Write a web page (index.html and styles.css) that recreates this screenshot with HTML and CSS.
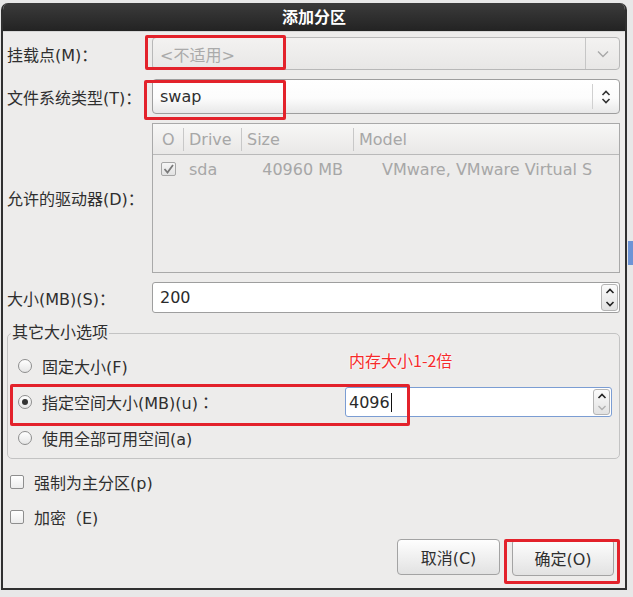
FILE: index.html
```html
<!DOCTYPE html>
<html lang="zh-CN">
<head>
<meta charset="utf-8">
<title>添加分区</title>
<link rel="stylesheet" href="styles.css">
</head>
<body>
<div class="screen">
  <div class="window">
    <div class="titlebar">添加分区</div>
    <div class="content">
      <div class="form">
        <label class="label">挂载点(M)<span class="colon">：</span></label>
        <div class="combo disabled">
          <span class="combo-text">&lt;不适用&gt;</span>
          <span class="combo-btn">
            <svg width="12" height="8" viewBox="0 0 12 8"><polyline points="1,1.5 6,6.5 11,1.5" fill="none" stroke="#a8a8a8" stroke-width="1.4"/></svg>
          </span>
        </div>

        <label class="label">文件系统类型(T)<span class="colon">：</span></label>
        <div class="combo active">
          <span class="combo-text">swap</span>
          <span class="combo-btn">
            <svg width="10" height="14" viewBox="0 0 10 14"><polyline points="1.5,5 5,1.5 8.5,5" fill="none" stroke="#333" stroke-width="1.6"/><polyline points="1.5,9 5,12.5 8.5,9" fill="none" stroke="#333" stroke-width="1.6"/></svg>
          </span>
        </div>

        <label class="label">允许的驱动器(D)<span class="colon">：</span></label>
        <div class="drives">
          <div class="drives-head">
            <span class="hc hc1">O</span>
            <span class="hc">Drive</span>
            <span class="hc">Size</span>
            <span class="hc">Model</span>
          </div>
          <div class="drives-row">
            <span class="dc dc1"><span class="tcheck"><svg width="13" height="12" viewBox="0 0 13 12"><polyline points="2.5,6 5.5,9.5 11,2" fill="none" stroke="#7a7a7a" stroke-width="1.8"/></svg></span></span>
            <span class="dc dc2">sda</span>
            <span class="dc dc3">40960 MB</span>
            <span class="dc dc4">VMware, VMware Virtual S</span>
          </div>
        </div>

        <label class="label">大小(MB)(S)<span class="colon">：</span></label>
        <div class="spin">
          <span class="spin-text">200</span>
          <span class="spin-btns">
            <span class="sb"><svg width="10" height="6" viewBox="0 0 10 6"><polyline points="1.5,5 5,1.5 8.5,5" fill="none" stroke="#222" stroke-width="1.6"/></svg></span>
            <span class="sb"><svg width="10" height="6" viewBox="0 0 10 6"><polyline points="1.5,1 5,4.5 8.5,1" fill="none" stroke="#222" stroke-width="1.6"/></svg></span>
          </span>
        </div>
      </div>

      <fieldset class="frame">
        <legend>其它大小选项</legend>
        <div class="opt"><span class="radio"></span>固定大小(F)</div>
        <div class="opt">
          <span class="radio checked"></span>指定空间大小(MB)(u)<span class="colon">：</span>
          <div class="spin focus">
            <span class="spin-text">4096<span class="caret"></span></span>
            <span class="spin-btns">
              <span class="sb"><svg width="10" height="6" viewBox="0 0 10 6"><polyline points="1.5,5 5,1.5 8.5,5" fill="none" stroke="#222" stroke-width="1.6"/></svg></span>
              <span class="sb"><svg width="10" height="6" viewBox="0 0 10 6"><polyline points="1.5,1 5,4.5 8.5,1" fill="none" stroke="#b0b0b0" stroke-width="1.4"/></svg></span>
            </span>
          </div>
        </div>
        <div class="opt"><span class="radio"></span>使用全部可用空间(a)</div>
      </fieldset>

      <div class="check-row"><span class="checkbox"></span>强制为主分区(p)</div>
      <div class="check-row"><span class="checkbox"></span>加密（E)</div>

      <div class="buttons">
        <button class="btn btn-cancel">取消(C)</button>
        <button class="btn btn-ok">确定(O)</button>
      </div>
    </div>
  </div>

  <div class="side-blue"></div>
  <div class="note">内存大小1-2倍</div>
  <div class="mark mark-mount"></div>
  <div class="mark mark-fs"></div>
  <div class="mark mark-size"></div>
  <div class="mark mark-ok"></div>
</div>
</body>
</html>
```

FILE: styles.css
```css
* { box-sizing: border-box; }
html, body { margin: 0; padding: 0; }
body {
  background: #e8e8e8;
  font-family: "DejaVu Sans", "Noto Sans CJK SC", sans-serif;
  font-size: 16px;
  color: #2f2f2f;
  width: 633px;
  height: 597px;
  overflow: hidden;
}
.screen { position: relative; width: 633px; height: 597px; }

.window {
  margin-left: 1px;
  margin-top: 3px;
  width: 626px;
  border: 2px solid #303030;
  border-top: none;
  border-radius: 7px 7px 0 0;
  overflow: hidden;
  background: #edeceb;
}
.titlebar {
  height: 29px;
  line-height: 29px;
  background: linear-gradient(#3b3b3b, #232323);
  color: #fff;
  font-weight: bold;
  font-size: 16px;
  text-align: center;
  border-bottom: 1px solid #d6d6d6;
}
.content { padding: 5px 5px 12px 4px; background: #edeceb; }

.form {
  display: grid;
  grid-template-columns: 145px 1fr;
  row-gap: 9px;
  align-items: center;
}
.label { white-space: nowrap; }
.colon { font-family: "Noto Sans CJK TC", "DejaVu Sans", sans-serif; }

.combo {
  display: flex;
  height: 33px;
  border: 1px solid #b8b8b8;
  border-radius: 4px;
  background: linear-gradient(#f3f2f1, #e8e7e6);
}
.combo-text { flex: 1; display: flex; align-items: center; padding-left: 7px; }
.combo.disabled .combo-text { color: #aaaaaa; }
.combo-btn {
  width: 34px;
  display: flex;
  align-items: center;
  justify-content: center;
  border-left: 1px solid #c6c6c6;
}
.combo.active {
  height: 35px;
  border-color: #9e9e9e;
  background: linear-gradient(#ffffff 0%, #fcfcfc 55%, #e8e8e8 100%);
}
.combo.active .combo-btn { width: 27px; margin: 4px 0; border-left-color: #d0d0d0; }

.drives {
  height: 150px;
  border: 1px solid #a9a9a9;
  background: #edeceb;
  overflow: hidden;
  color: #a7a7a7;
}
.drives-head {
  display: grid;
  grid-template-columns: 30px 58px 112px 1fr;
  align-items: center;
  height: 31px;
  border-bottom: 1px solid #b9b9b9;
  background: linear-gradient(#f7f7f6, #e9e8e7);
}
.hc { height: 23px; line-height: 23px; padding-left: 5px; border-left: 1px solid #c8c8c8; }
.hc1 { border-left: none; padding-left: 9px; }
.drives-row {
  display: grid;
  grid-template-columns: 30px 58px 112px 1fr;
  align-items: center;
  height: 28px;
  white-space: nowrap;
}
.dc1 { padding-left: 8px; display: flex; }
.dc2 { padding-left: 6px; }
.dc3 { text-align: right; padding-right: 10px; }
.dc4 { padding-left: 29px; overflow: hidden; }
.tcheck {
  width: 15px;
  height: 14px;
  border: 1px solid #a6a6a6;
  border-radius: 2px;
  background: linear-gradient(#f6f6f6, #e2e2e2);
  display: flex;
  align-items: center;
  justify-content: center;
}

.spin {
  display: flex;
  height: 31px;
  border: 1px solid #9e9e9e;
  border-radius: 3px;
  background: #fff;
}
.spin-text { flex: 1; display: flex; align-items: center; padding-left: 7px; color: #2a2a2a; }
.spin-btns {
  width: 17px;
  margin: 1px;
  display: flex;
  flex-direction: column;
  border: 1px solid #b4b4b4;
  border-radius: 3px;
  background: linear-gradient(#fbfbfb, #e2e2e2);
}
.sb { flex: 1; display: flex; align-items: center; justify-content: center; }
.spin.focus {
  width: 267px;
  height: 30px;
  margin-left: auto;
  border-color: #7b9dd3;
}
.spin.focus .spin-text { padding-left: 3px; }
.caret { display: inline-block; width: 1px; height: 19px; background: #111; margin-left: 1px; }

.frame {
  margin: 10px 0 0 0;
  padding: 8px 7px 5px 10px;
  border: 1px solid #c3c3c3;
  border-radius: 5px;
  min-width: 0;
}
.frame legend {
  padding: 0 1px;
  margin-left: -7px;
  line-height: 20px;
  font-size: 16px;
}
.opt { display: flex; align-items: center; height: 30px; white-space: nowrap; }
.opt + .opt { margin-top: 6px; }
.radio {
  width: 14px;
  height: 14px;
  margin-right: 10px;
  border: 1px solid #8e8e8e;
  border-radius: 50%;
  background: linear-gradient(#ffffff, #e6e6e6);
  display: flex;
  align-items: center;
  justify-content: center;
  flex: none;
}
.radio.checked::after {
  content: "";
  width: 6px;
  height: 6px;
  border-radius: 50%;
  background: #333;
}

.check-row { display: flex; align-items: center; height: 24px; padding-left: 3px; margin-top: 11px; }
.checkbox {
  width: 14px;
  height: 14px;
  margin-right: 10px;
  border: 1px solid #8e8e8e;
  border-radius: 2px;
  background: linear-gradient(#ffffff, #ececec);
  flex: none;
}

.buttons { display: flex; justify-content: flex-end; gap: 12px; margin-top: 10px; margin-right: 6px; }
.btn {
  height: 36px;
  font-family: inherit;
  font-size: 16px;
  color: #2f2f2f;
  border: 1px solid #a3a3a3;
  border-radius: 4px;
  background: linear-gradient(#fefefe, #e2e2e2);
  padding: 0;
}
.btn-cancel { width: 103px; }
.btn-ok { width: 102px; height: 37px; }

.side-blue { position: absolute; left: 628px; top: 238px; width: 5px; height: 24px; background: #6d94d6; }
.note {
  position: absolute;
  left: 349px;
  top: 347px;
  line-height: 20px;
  color: #f52b2b;
  font-family: "Noto Sans CJK SC", "DejaVu Sans", sans-serif;
  font-size: 16px;
  text-shadow: 0 0 2px #fff, 0 0 2px #fff;
  white-space: nowrap;
}
.mark { position: absolute; border: 3px solid #e3222b; border-radius: 2px; }
.mark-mount { left: 145px; top: 32px; width: 141px; height: 35px; }
.mark-fs { left: 144px; top: 77px; width: 142px; height: 40px; }
.mark-size { left: 10px; top: 381px; width: 400px; height: 42px; }
.mark-ok { left: 504px; top: 536px; width: 116px; height: 45px; }
```
